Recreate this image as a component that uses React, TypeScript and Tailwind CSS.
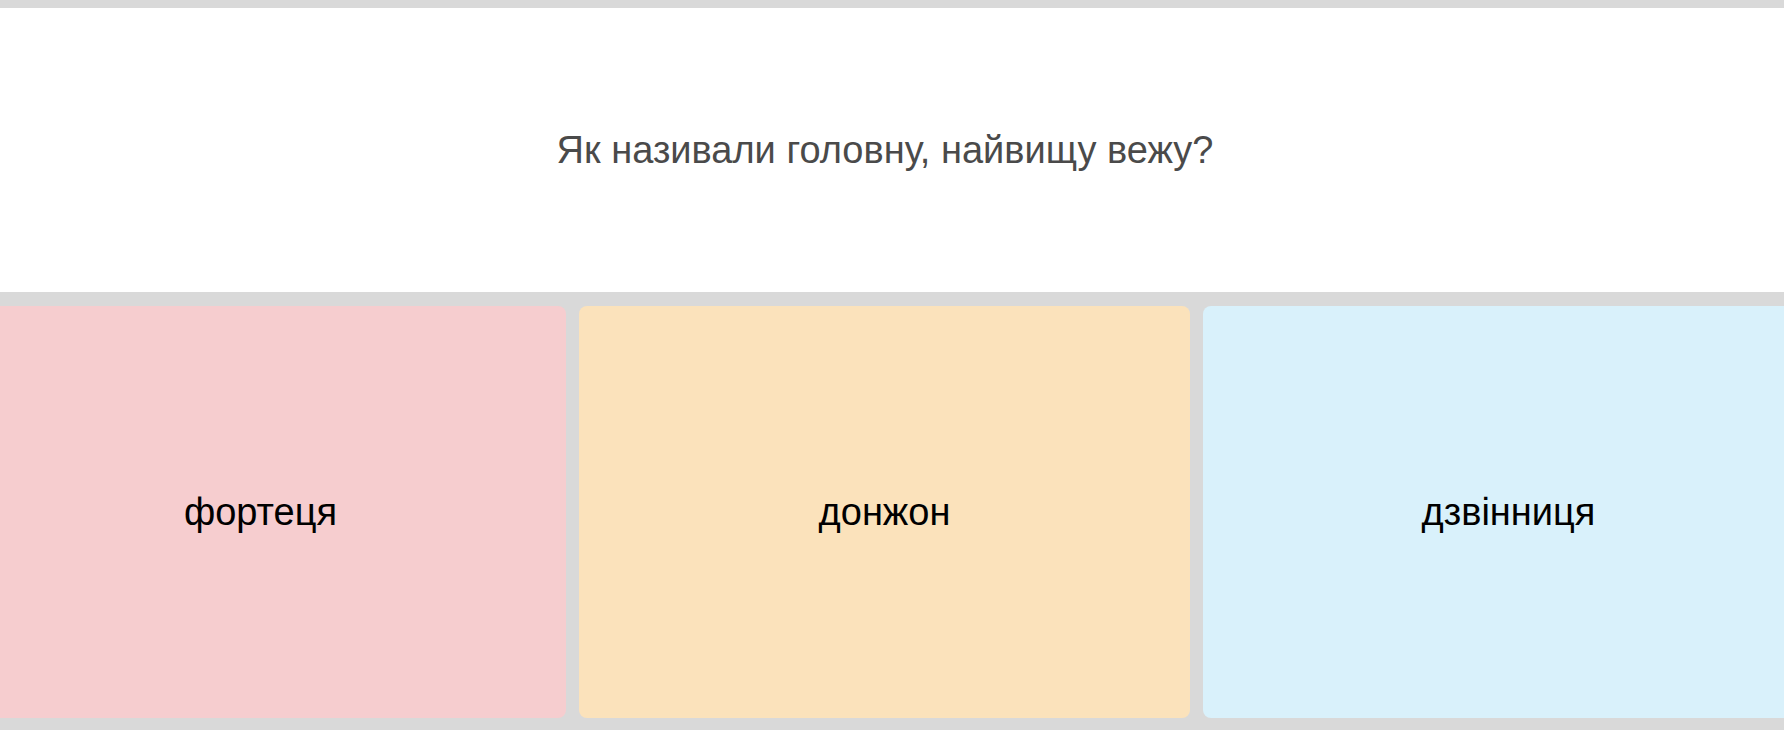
const answers = [
  { text: "фортеця", bg: "bg-[#f6cdcf]" },
  { text: "донжон", bg: "bg-[#fbe2bb]" },
  { text: "дзвінниця", bg: "bg-[#d9f1fb]" },
];

export default function App() {
  return (
    <div className="h-[730px] w-full overflow-hidden bg-[#d9d9d9] pt-2 font-['Liberation_Sans',Arial,sans-serif]">
      <div className="flex h-[284px] items-center justify-center bg-white pr-[14px]">
        <p className="text-[38px] text-[#4a4a4a]">Як називали головну, найвищу вежу?</p>
      </div>
      <div className="mt-[14px] flex gap-[13px] -ml-[45px]">
        {answers.map((a) => (
          <div
            key={a.text}
            className={`flex h-[412px] w-[611px] shrink-0 items-center justify-center rounded-[8px] ${a.bg}`}
          >
            <span className="text-[38px] text-black">{a.text}</span>
          </div>
        ))}
      </div>
    </div>
  );
}
